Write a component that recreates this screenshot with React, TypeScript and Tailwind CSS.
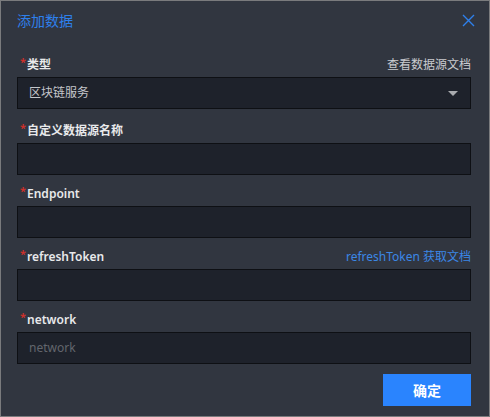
import React from "react";

const font = { fontFamily: '"Noto Sans", "Noto Sans CJK SC", sans-serif' };

function Label({ text, right, rightBlue }: { text: string; right?: string; rightBlue?: boolean }) {
  return (
    <div className="flex h-[18px] items-center justify-between mb-[4px] relative top-[1px]">
      <div className="flex items-center text-[12px] font-semibold text-[#e8e9eb] leading-[18px]">
        <span className="text-[#d4302a] text-[11px] mr-[1px] relative top-[-3px] ml-[3px]">*</span>
        {text}
      </div>
      {right && (
        <span className={"text-[12px] leading-[18px] " + (rightBlue ? "text-[#3b87e6]" : "text-[#c9cbcf]")}>{right}</span>
      )}
    </div>
  );
}

function Box({ children }: { children?: React.ReactNode }) {
  return (
    <div className="h-[32px] bg-[#1e222b] border border-[#0e1014] flex items-center px-[11px] text-[12px]">
      {children}
    </div>
  );
}

export default function App() {
  return (
    <div style={font} className="w-[490px] h-[417px] border border-[#7a7b7d] bg-[#313640] flex flex-col">
      <div className="h-[38px] flex items-center justify-between pl-4 pr-[14px]">
        <span className="text-[14px] text-[#2e80ec]">添加数据</span>
        <svg width="13" height="13" viewBox="0 0 13 13" className="mt-[1px]">
          <path d="M1 1 L12 12 M12 1 L1 12" stroke="#2e80ec" strokeWidth="1.4" />
        </svg>
      </div>
      <div className="flex flex-col pl-4 pr-[18px] pt-[16px]">
        <div className="mb-[12px]">
          <Label text="类型" right="查看数据源文档" />
          <Box>
            <div className="flex-1 text-[#c5c7cb]">区块链服务</div>
            <svg width="10" height="5" viewBox="0 0 10 5" className="mr-[1px]">
              <path d="M0 0 L10 0 L5 5 Z" fill="#a9abaf" />
            </svg>
          </Box>
        </div>
        <div className="mb-[9px]">
          <Label text="自定义数据源名称" />
          <Box />
        </div>
        <div className="mb-[9px]">
          <Label text="Endpoint" />
          <Box />
        </div>
        <div className="mb-[9px]">
          <Label text="refreshToken" right="refreshToken 获取文档" rightBlue />
          <Box />
        </div>
        <div>
          <Label text="network" />
          <Box>
            <span className="text-[#62666d]">network</span>
          </Box>
        </div>
        <div className="flex justify-end mt-[10px]">
          <button className="w-[88px] h-[32px] bg-[#2a84fe] text-white text-[14px] font-bold">确定</button>
        </div>
      </div>
    </div>
  );
}
